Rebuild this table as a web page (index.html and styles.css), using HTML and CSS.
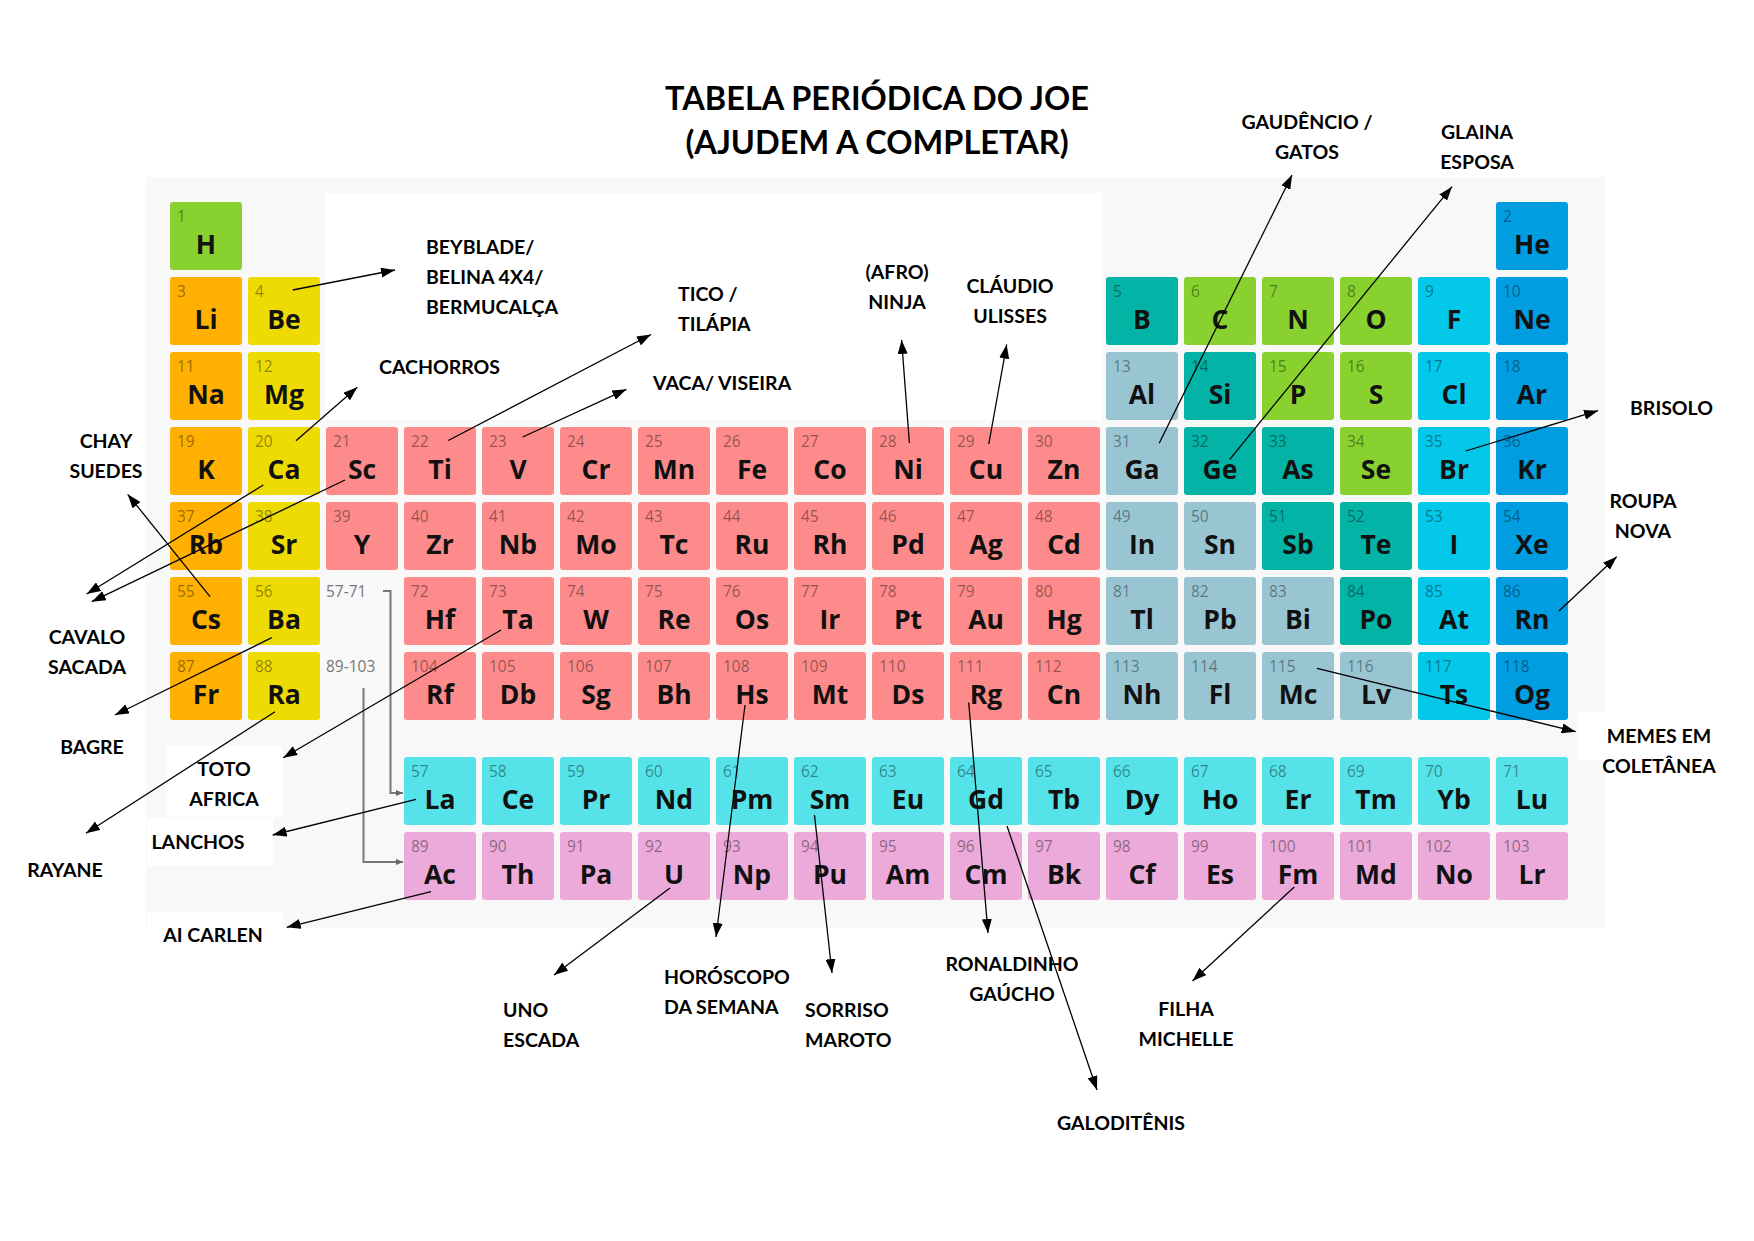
FILE: index.html
```html
<!DOCTYPE html>
<html lang="pt">
<head>
<meta charset="utf-8">
<title>Tabela Periódica do Joe</title>
<link rel="stylesheet" href="styles.css">
</head>
<body>
<div class="page">
  <h1 class="title">TABELA PERIÓDICA DO JOE<br>(AJUDEM A COMPLETAR)</h1>

  <div class="panel">
    <div class="ptable">
      <div class="gap-white"></div>
      <div class="el nm"><div class="num">1</div><div class="sym">H</div></div>
      <div class="el ng c18"><div class="num">2</div><div class="sym">He</div></div>

      <div class="el al"><div class="num">3</div><div class="sym">Li</div></div>
      <div class="el ae"><div class="num">4</div><div class="sym">Be</div></div>
      <div class="el md c13"><div class="num">5</div><div class="sym">B</div></div>
      <div class="el nm"><div class="num">6</div><div class="sym">C</div></div>
      <div class="el nm"><div class="num">7</div><div class="sym">N</div></div>
      <div class="el nm"><div class="num">8</div><div class="sym">O</div></div>
      <div class="el ha"><div class="num">9</div><div class="sym">F</div></div>
      <div class="el ng"><div class="num">10</div><div class="sym">Ne</div></div>

      <div class="el al"><div class="num">11</div><div class="sym">Na</div></div>
      <div class="el ae"><div class="num">12</div><div class="sym">Mg</div></div>
      <div class="el pt c13"><div class="num">13</div><div class="sym">Al</div></div>
      <div class="el md"><div class="num">14</div><div class="sym">Si</div></div>
      <div class="el nm"><div class="num">15</div><div class="sym">P</div></div>
      <div class="el nm"><div class="num">16</div><div class="sym">S</div></div>
      <div class="el ha"><div class="num">17</div><div class="sym">Cl</div></div>
      <div class="el ng"><div class="num">18</div><div class="sym">Ar</div></div>

      <div class="el al"><div class="num">19</div><div class="sym">K</div></div>
      <div class="el ae"><div class="num">20</div><div class="sym">Ca</div></div>
      <div class="el tm"><div class="num">21</div><div class="sym">Sc</div></div>
      <div class="el tm"><div class="num">22</div><div class="sym">Ti</div></div>
      <div class="el tm"><div class="num">23</div><div class="sym">V</div></div>
      <div class="el tm"><div class="num">24</div><div class="sym">Cr</div></div>
      <div class="el tm"><div class="num">25</div><div class="sym">Mn</div></div>
      <div class="el tm"><div class="num">26</div><div class="sym">Fe</div></div>
      <div class="el tm"><div class="num">27</div><div class="sym">Co</div></div>
      <div class="el tm"><div class="num">28</div><div class="sym">Ni</div></div>
      <div class="el tm"><div class="num">29</div><div class="sym">Cu</div></div>
      <div class="el tm"><div class="num">30</div><div class="sym">Zn</div></div>
      <div class="el pt"><div class="num">31</div><div class="sym">Ga</div></div>
      <div class="el md"><div class="num">32</div><div class="sym">Ge</div></div>
      <div class="el md"><div class="num">33</div><div class="sym">As</div></div>
      <div class="el nm"><div class="num">34</div><div class="sym">Se</div></div>
      <div class="el ha"><div class="num">35</div><div class="sym">Br</div></div>
      <div class="el ng"><div class="num">36</div><div class="sym">Kr</div></div>

      <div class="el al"><div class="num">37</div><div class="sym">Rb</div></div>
      <div class="el ae"><div class="num">38</div><div class="sym">Sr</div></div>
      <div class="el tm"><div class="num">39</div><div class="sym">Y</div></div>
      <div class="el tm"><div class="num">40</div><div class="sym">Zr</div></div>
      <div class="el tm"><div class="num">41</div><div class="sym">Nb</div></div>
      <div class="el tm"><div class="num">42</div><div class="sym">Mo</div></div>
      <div class="el tm"><div class="num">43</div><div class="sym">Tc</div></div>
      <div class="el tm"><div class="num">44</div><div class="sym">Ru</div></div>
      <div class="el tm"><div class="num">45</div><div class="sym">Rh</div></div>
      <div class="el tm"><div class="num">46</div><div class="sym">Pd</div></div>
      <div class="el tm"><div class="num">47</div><div class="sym">Ag</div></div>
      <div class="el tm"><div class="num">48</div><div class="sym">Cd</div></div>
      <div class="el pt"><div class="num">49</div><div class="sym">In</div></div>
      <div class="el pt"><div class="num">50</div><div class="sym">Sn</div></div>
      <div class="el md"><div class="num">51</div><div class="sym">Sb</div></div>
      <div class="el md"><div class="num">52</div><div class="sym">Te</div></div>
      <div class="el ha"><div class="num">53</div><div class="sym">I</div></div>
      <div class="el ng"><div class="num">54</div><div class="sym">Xe</div></div>

      <div class="el al"><div class="num">55</div><div class="sym">Cs</div></div>
      <div class="el ae"><div class="num">56</div><div class="sym">Ba</div></div>
      <div class="el range"><div class="num">57-71</div></div>
      <div class="el tm"><div class="num">72</div><div class="sym">Hf</div></div>
      <div class="el tm"><div class="num">73</div><div class="sym">Ta</div></div>
      <div class="el tm"><div class="num">74</div><div class="sym">W</div></div>
      <div class="el tm"><div class="num">75</div><div class="sym">Re</div></div>
      <div class="el tm"><div class="num">76</div><div class="sym">Os</div></div>
      <div class="el tm"><div class="num">77</div><div class="sym">Ir</div></div>
      <div class="el tm"><div class="num">78</div><div class="sym">Pt</div></div>
      <div class="el tm"><div class="num">79</div><div class="sym">Au</div></div>
      <div class="el tm"><div class="num">80</div><div class="sym">Hg</div></div>
      <div class="el pt"><div class="num">81</div><div class="sym">Tl</div></div>
      <div class="el pt"><div class="num">82</div><div class="sym">Pb</div></div>
      <div class="el pt"><div class="num">83</div><div class="sym">Bi</div></div>
      <div class="el md"><div class="num">84</div><div class="sym">Po</div></div>
      <div class="el ha"><div class="num">85</div><div class="sym">At</div></div>
      <div class="el ng"><div class="num">86</div><div class="sym">Rn</div></div>

      <div class="el al"><div class="num">87</div><div class="sym">Fr</div></div>
      <div class="el ae"><div class="num">88</div><div class="sym">Ra</div></div>
      <div class="el range"><div class="num">89-103</div></div>
      <div class="el tm"><div class="num">104</div><div class="sym">Rf</div></div>
      <div class="el tm"><div class="num">105</div><div class="sym">Db</div></div>
      <div class="el tm"><div class="num">106</div><div class="sym">Sg</div></div>
      <div class="el tm"><div class="num">107</div><div class="sym">Bh</div></div>
      <div class="el tm"><div class="num">108</div><div class="sym">Hs</div></div>
      <div class="el tm"><div class="num">109</div><div class="sym">Mt</div></div>
      <div class="el tm"><div class="num">110</div><div class="sym">Ds</div></div>
      <div class="el tm"><div class="num">111</div><div class="sym">Rg</div></div>
      <div class="el tm"><div class="num">112</div><div class="sym">Cn</div></div>
      <div class="el pt"><div class="num">113</div><div class="sym">Nh</div></div>
      <div class="el pt"><div class="num">114</div><div class="sym">Fl</div></div>
      <div class="el pt"><div class="num">115</div><div class="sym">Mc</div></div>
      <div class="el pt"><div class="num">116</div><div class="sym">Lv</div></div>
      <div class="el ha"><div class="num">117</div><div class="sym">Ts</div></div>
      <div class="el ng"><div class="num">118</div><div class="sym">Og</div></div>
    </div>

    <div class="fblock">
      <div class="el ln"><div class="num">57</div><div class="sym">La</div></div>
      <div class="el ln"><div class="num">58</div><div class="sym">Ce</div></div>
      <div class="el ln"><div class="num">59</div><div class="sym">Pr</div></div>
      <div class="el ln"><div class="num">60</div><div class="sym">Nd</div></div>
      <div class="el ln"><div class="num">61</div><div class="sym">Pm</div></div>
      <div class="el ln"><div class="num">62</div><div class="sym">Sm</div></div>
      <div class="el ln"><div class="num">63</div><div class="sym">Eu</div></div>
      <div class="el ln"><div class="num">64</div><div class="sym">Gd</div></div>
      <div class="el ln"><div class="num">65</div><div class="sym">Tb</div></div>
      <div class="el ln"><div class="num">66</div><div class="sym">Dy</div></div>
      <div class="el ln"><div class="num">67</div><div class="sym">Ho</div></div>
      <div class="el ln"><div class="num">68</div><div class="sym">Er</div></div>
      <div class="el ln"><div class="num">69</div><div class="sym">Tm</div></div>
      <div class="el ln"><div class="num">70</div><div class="sym">Yb</div></div>
      <div class="el ln"><div class="num">71</div><div class="sym">Lu</div></div>

      <div class="el ac"><div class="num">89</div><div class="sym">Ac</div></div>
      <div class="el ac"><div class="num">90</div><div class="sym">Th</div></div>
      <div class="el ac"><div class="num">91</div><div class="sym">Pa</div></div>
      <div class="el ac"><div class="num">92</div><div class="sym">U</div></div>
      <div class="el ac"><div class="num">93</div><div class="sym">Np</div></div>
      <div class="el ac"><div class="num">94</div><div class="sym">Pu</div></div>
      <div class="el ac"><div class="num">95</div><div class="sym">Am</div></div>
      <div class="el ac"><div class="num">96</div><div class="sym">Cm</div></div>
      <div class="el ac"><div class="num">97</div><div class="sym">Bk</div></div>
      <div class="el ac"><div class="num">98</div><div class="sym">Cf</div></div>
      <div class="el ac"><div class="num">99</div><div class="sym">Es</div></div>
      <div class="el ac"><div class="num">100</div><div class="sym">Fm</div></div>
      <div class="el ac"><div class="num">101</div><div class="sym">Md</div></div>
      <div class="el ac"><div class="num">102</div><div class="sym">No</div></div>
      <div class="el ac"><div class="num">103</div><div class="sym">Lr</div></div>
    </div>
  </div>

  <div class="wbox wb-toto"></div>
  <div class="wbox wb-lanchos"></div>
  <div class="wbox wb-carlen"></div>
  <div class="wbox wb-memes"></div>

  <div class="lbl l-beyblade">BEYBLADE/<br>BELINA 4X4/<br>BERMUCALÇA</div>
  <div class="lbl l-cachorros">CACHORROS</div>
  <div class="lbl l-tico">TICO /<br>TILÁPIA</div>
  <div class="lbl l-vaca">VACA/ VISEIRA</div>
  <div class="lbl ctr l-ninja">(AFRO)<br>NINJA</div>
  <div class="lbl ctr l-claudio">CLÁUDIO<br>ULISSES</div>
  <div class="lbl ctr l-gaudencio">GAUDÊNCIO /<br>GATOS</div>
  <div class="lbl ctr l-glaina">GLAINA<br>ESPOSA</div>
  <div class="lbl l-brisolo">BRISOLO</div>
  <div class="lbl ctr l-roupa">ROUPA<br>NOVA</div>
  <div class="lbl ctr l-memes">MEMES EM<br>COLETÂNEA</div>
  <div class="lbl ctr l-chay">CHAY<br>SUEDES</div>
  <div class="lbl ctr l-cavalo">CAVALO<br>SACADA</div>
  <div class="lbl ctr l-bagre">BAGRE</div>
  <div class="lbl ctr l-toto">TOTO<br>AFRICA</div>
  <div class="lbl ctr l-lanchos">LANCHOS</div>
  <div class="lbl ctr l-rayane">RAYANE</div>
  <div class="lbl ctr l-carlen">AI CARLEN</div>
  <div class="lbl l-uno">UNO<br>ESCADA</div>
  <div class="lbl l-horoscopo">HORÓSCOPO<br>DA SEMANA</div>
  <div class="lbl l-sorriso">SORRISO<br>MAROTO</div>
  <div class="lbl ctr l-ronaldinho">RONALDINHO<br>GAÚCHO</div>
  <div class="lbl ctr l-galo">GALODITÊNIS</div>
  <div class="lbl ctr l-filha">FILHA<br>MICHELLE</div>

  <svg class="arrows" width="1754" height="1241" viewBox="0 0 1754 1241" xmlns="http://www.w3.org/2000/svg">
    <defs>
      <marker id="ah" markerUnits="userSpaceOnUse" markerWidth="14" markerHeight="10" viewBox="0 0 14 10" refX="14" refY="5" orient="auto">
        <path d="M0,0 L14,5 L0,10 z" fill="#000"/>
      </marker>
      <marker id="gh" markerUnits="userSpaceOnUse" markerWidth="7" markerHeight="6" viewBox="0 0 7 6" refX="7" refY="3" orient="auto">
        <path d="M0,0 L7,3 L0,6 z" fill="#666"/>
      </marker>
    </defs>
    <g class="conn">
      <polyline points="383,591 390.5,591 390.5,793 403,793" marker-end="url(#gh)"/>
      <polyline points="363.5,688 363.5,862 403,862" marker-end="url(#gh)"/>
    </g>
    <g class="arr">
      <line x1="292.7" y1="290" x2="395" y2="270" marker-end="url(#ah)"/>
      <line x1="296" y1="440.7" x2="357.3" y2="387.3" marker-end="url(#ah)"/>
      <line x1="448.3" y1="440.5" x2="651" y2="334.5" marker-end="url(#ah)"/>
      <line x1="522.7" y1="437" x2="626.4" y2="389.3" marker-end="url(#ah)"/>
      <line x1="909.4" y1="443" x2="901.6" y2="340" marker-end="url(#ah)"/>
      <line x1="988.8" y1="444" x2="1006.7" y2="344.5" marker-end="url(#ah)"/>
      <line x1="1159.2" y1="443.3" x2="1292" y2="175" marker-end="url(#ah)"/>
      <line x1="1229.8" y1="459.3" x2="1452" y2="186.7" marker-end="url(#ah)"/>
      <line x1="1465.7" y1="451" x2="1598" y2="410.7" marker-end="url(#ah)"/>
      <line x1="1559" y1="611" x2="1616.7" y2="556.7" marker-end="url(#ah)"/>
      <line x1="1317" y1="668.3" x2="1575.7" y2="731.7" marker-end="url(#ah)"/>
      <line x1="210" y1="596.7" x2="127.7" y2="494.3" marker-end="url(#ah)"/>
      <line x1="263.3" y1="485" x2="86.7" y2="594" marker-end="url(#ah)"/>
      <line x1="345" y1="480" x2="91.7" y2="601.7" marker-end="url(#ah)"/>
      <line x1="271.7" y1="637.7" x2="115" y2="715" marker-end="url(#ah)"/>
      <line x1="275" y1="711.7" x2="86" y2="833.3" marker-end="url(#ah)"/>
      <line x1="501" y1="630" x2="283.3" y2="757.7" marker-end="url(#ah)"/>
      <line x1="416" y1="799.3" x2="272.7" y2="835" marker-end="url(#ah)"/>
      <line x1="431" y1="891.7" x2="286.7" y2="927.3" marker-end="url(#ah)"/>
      <line x1="670" y1="888" x2="554" y2="975" marker-end="url(#ah)"/>
      <line x1="745" y1="705" x2="716" y2="937" marker-end="url(#ah)"/>
      <line x1="814.5" y1="815" x2="832" y2="973" marker-end="url(#ah)"/>
      <line x1="968.7" y1="702.5" x2="988" y2="933" marker-end="url(#ah)"/>
      <line x1="1007" y1="826" x2="1097" y2="1090" marker-end="url(#ah)"/>
      <line x1="1294.3" y1="887" x2="1192.5" y2="981" marker-end="url(#ah)"/>
    </g>
  </svg>
</div>
</body>
</html>
```

FILE: styles.css
```css
html, body {
  margin: 0;
  padding: 0;
  background: #ffffff;
}

.page {
  position: relative;
  width: 1754px;
  height: 1241px;
  overflow: hidden;
  background: #ffffff;
  font-family: "Open Sans", "DejaVu Sans", sans-serif;
}

.title {
  margin: 0;
  padding-top: 76px;
  height: 86px;
  font-family: Lato, "Liberation Sans", sans-serif;
  font-weight: 700;
  font-size: 32.5px;
  line-height: 44px;
  text-align: center;
  color: #000;
}

.panel {
  margin: 15px 0 0 146px;
  width: 1459px;
  box-sizing: border-box;
  padding: 25px 37px 28px 24px;
  background: #f8f8f8;
}

.ptable {
  display: grid;
  grid-template-columns: repeat(18, 72px);
  grid-auto-rows: 68px;
  column-gap: 6px;
  row-gap: 7px;
}

.fblock {
  display: grid;
  grid-template-columns: repeat(15, 72px);
  grid-auto-rows: 68px;
  column-gap: 6px;
  row-gap: 7px;
  margin: 37px 0 0 234px;
}

.gap-white {
  grid-column: 3 / 13;
  grid-row: 1 / 4;
  background: #ffffff;
  margin: -9px -2px 0 -1px;
}

.c13 { grid-column-start: 13; }
.c18 { grid-column-start: 18; }

.el {
  border-radius: 3px;
  box-sizing: border-box;
  padding-top: 5px;
}

.num {
  padding-left: 7px;
  font-size: 15.5px;
  line-height: 18px;
  color: rgba(0, 0, 0, 0.42);
}

.sym {
  margin-top: 4px;
  font-weight: 700;
  font-size: 26.5px;
  line-height: 30px;
  text-align: center;
  color: #111;
}

.range .num {
  padding-left: 0;
  color: #777;
}

.nm { background: #88d12f; }
.al { background: #ffb000; }
.ae { background: #efdb04; }
.tm { background: #fd8b8b; }
.pt { background: #99c5d3; }
.md { background: #03b3a6; }
.ha { background: #03c8ea; }
.ng { background: #019de1; }
.ln { background: #55e3e9; }
.ac { background: #ebaad9; }

.wbox {
  position: absolute;
  background: #ffffff;
}
.wb-toto { left: 166px; top: 746px; width: 117px; height: 71px; }
.wb-lanchos { left: 147px; top: 818px; width: 126px; height: 48px; }
.wb-carlen { left: 147px; top: 912px; width: 136px; height: 40px; }
.wb-memes { left: 1577px; top: 712px; width: 177px; height: 48px; }

.lbl {
  position: absolute;
  font-family: Lato, "Liberation Sans", sans-serif;
  font-weight: 700;
  font-size: 19.5px;
  line-height: 30px;
  color: #000;
  white-space: nowrap;
}
.ctr {
  transform: translateX(-50%);
  text-align: center;
}

.l-beyblade { left: 426px; top: 232px; }
.l-cachorros { left: 379px; top: 352px; }
.l-tico { left: 678px; top: 279px; }
.l-vaca { left: 653px; top: 368px; }
.l-ninja { left: 897px; top: 257px; }
.l-claudio { left: 1010px; top: 271px; }
.l-gaudencio { left: 1307px; top: 107px; }
.l-glaina { left: 1477px; top: 117px; }
.l-brisolo { left: 1630px; top: 393px; }
.l-roupa { left: 1643px; top: 486px; }
.l-memes { left: 1659px; top: 721px; }
.l-chay { left: 106px; top: 426px; }
.l-cavalo { left: 87px; top: 622px; }
.l-bagre { left: 92px; top: 732px; }
.l-toto { left: 224px; top: 754px; }
.l-lanchos { left: 198px; top: 827px; }
.l-rayane { left: 65px; top: 855px; }
.l-carlen { left: 213px; top: 920px; }
.l-uno { left: 503px; top: 995px; }
.l-horoscopo { left: 664px; top: 962px; }
.l-sorriso { left: 805px; top: 995px; }
.l-ronaldinho { left: 1012px; top: 949px; }
.l-galo { left: 1121px; top: 1108px; }
.l-filha { left: 1186px; top: 994px; }

.arrows {
  position: absolute;
  left: 0;
  top: 0;
  pointer-events: none;
}
.arr line {
  stroke: #000;
  stroke-width: 1.3;
}
.conn polyline {
  fill: none;
  stroke: #777;
  stroke-width: 2;
}
```
